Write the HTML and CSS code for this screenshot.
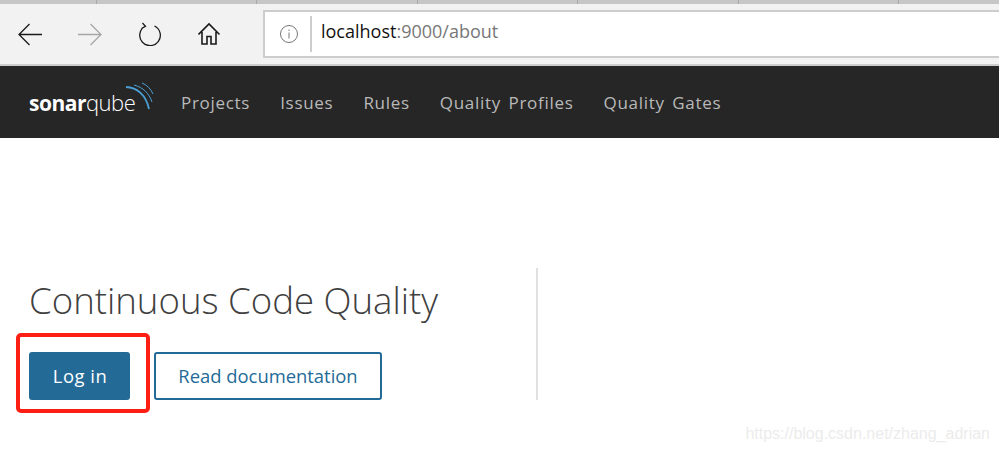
FILE: index.html
```html
<!DOCTYPE html>
<html lang="en">
  <head>
    <meta charset="UTF-8" />
    <meta name="viewport" content="width=device-width, initial-scale=1.0" />
    <title>SonarQube</title>
    <link rel="stylesheet" href="styles.css">
  </head>

  <body>
    <div class="tabs">
      <span class="tab tab-first"></span>
      <span class="tab"></span>
      <span class="tab"></span>
      <span class="tab"></span>
      <span class="tab"></span>
      <span class="tab"></span>
    </div>

    <div class="toolbar">
      <div class="toolbar-icons">
        <svg class="tool" viewBox="0 0 24 24" fill="none" stroke="#1a1a1a" stroke-width="1.3">
          <path d="M1 12.500H24M11.500 2L1 12.500 11.500 23" />
        </svg>
        <svg class="tool" viewBox="0 0 24 24" fill="none" stroke="#a6a6a6" stroke-width="1.3">
          <path d="M0 12.500H23M12.500 2L23 12.500 12.500 23" />
        </svg>
        <svg class="tool" viewBox="0 0 24 24" fill="none" stroke="#1a1a1a" stroke-width="1.3">
          <path d="M7 4.300A10.300 10.300 0 1 0 16.500 4M4.500 1L7.500 4.300 3.500 6.500" />
        </svg>
        <svg class="tool" viewBox="0 0 24 24" fill="none" stroke="#1a1a1a" stroke-width="1.6">
          <path d="M.5 12.500L11 2l10.500 10.500M4 10v12h5v-7.500h4V22h5V10" />
        </svg>
      </div>
      <div class="address">
        <svg class="info" viewBox="0 0 20 20" fill="none" stroke="#777" stroke-width="1">
          <circle cx="10" cy="10" r="8.500" />
          <path d="M10 8.500v6M10 5.500v1.500" />
        </svg>
        <span class="address-text"><b>localhost</b>:9000/about</span>
      </div>
    </div>

    <nav class="navbar">
      <a class="logo" href="#">
        <span class="logo-sonar">sonar</span><span class="logo-qube">qube</span>
        <svg class="logo-arcs" viewBox="0 0 30 30" fill="none" stroke="#4b9fd5">
          <path stroke-width="1.8" d="M1 5c11 .5 20 8 23 22" />
          <path stroke-width="1" d="M9 3c9 2.500 15 8 18 17" />
          <path stroke-width="1" d="M17 1c5 2 9 6 11 11" />
        </svg>
      </a>
      <ul class="menu">
        <li>Projects</li>
        <li>Issues</li>
        <li>Rules</li>
        <li>Quality Profiles</li>
        <li>Quality Gates</li>
      </ul>
    </nav>

    <main class="content">
      <section class="hero">
        <h1>Continuous Code Quality</h1>
        <div class="actions">
          <a class="btn btn-primary" href="#">Log in</a>
          <a class="btn btn-outline" href="#">Read documentation</a>
          <span class="red-box"></span>
        </div>
      </section>
      <div class="watermark">https://blog.csdn.net/zhang_adrian</div>
    </main>
  </body>
</html>
```

FILE: styles.css
```css
body {
  font-family: "Open Sans", "Noto Sans", sans-serif;
  margin: 0;
  padding: 0;
  height: 452px;
  overflow: hidden;
  background-color: #fff;
  display: flex;
  flex-direction: column;
}

.tabs {
  display: flex;
  height: 4px;
  background-color: #c6c6c6;
}

.tab {
  width: 160.4px;
  border-right: 1px solid #a9a9a9;
  box-sizing: border-box;
}

.tab-first {
  width: 97px;
}

.toolbar {
  display: flex;
  align-items: center;
  height: 60px;
  background-color: #f2f2f2;
  border-bottom: 2px solid #cdcdcd;
}

.toolbar-icons {
  display: flex;
  gap: 36px;
  width: 263px;
  padding-left: 18px;
  box-sizing: border-box;
}

.tool {
  width: 24px;
  height: 24px;
}

.address {
  flex: 1;
  display: flex;
  align-items: center;
  height: 48px;
  background-color: #fff;
  border: 2px solid #cdcdcd;
  border-right: none;
  box-sizing: border-box;
}

.info {
  width: 20px;
  height: 20px;
  margin-left: 14px;
}

.address-text {
  margin-left: 11px;
  padding-left: 9px;
  height: 36px;
  line-height: 30px;
  border-left: 2px solid #cdcdcd;
  font-size: 18px;
  color: #777;
}

.address-text b {
  font-weight: 400;
  color: #111;
}

.navbar {
  display: flex;
  align-items: center;
  height: 72px;
  background-color: #262626;
  padding-left: 29px;
}

.logo {
  display: flex;
  align-items: baseline;
  position: relative;
  width: 152px;
  color: #fff;
  text-decoration: none;
  line-height: 24px;
  letter-spacing: -0.5px;
}

.logo-sonar {
  font-size: 21px;
  font-weight: 700;
}

.logo-qube {
  font-size: 22px;
  font-weight: 300;
}

.logo-arcs {
  position: absolute;
  left: 96px;
  top: -8px;
  width: 30px;
  height: 30px;
}

.menu {
  display: flex;
  gap: 30px;
  list-style: none;
  margin: 0;
  padding: 0;
  font-size: 17px;
  letter-spacing: 0.7px;
  word-spacing: 2.5px;
  color: #b9b9b9;
}

.content {
  flex: 1;
  padding: 130px 0 0 29px;
  position: relative;
}

.hero {
  width: 507px;
  height: 132px;
  border-right: 2px solid #e1e1e1;
}

h1 {
  margin: 0;
  height: 84px;
  padding-top: 7px;
  box-sizing: border-box;
  font-size: 36.6px;
  font-weight: 300;
  line-height: 50px;
  color: #404040;
}

.actions {
  display: flex;
  gap: 24px;
  position: relative;
}

.btn {
  height: 48px;
  box-sizing: border-box;
  border-radius: 3px;
  font-size: 18.4px;
  line-height: 44px;
  text-align: center;
  text-decoration: none;
  border: 2px solid #236a97;
}

.btn-primary {
  width: 101px;
  background-color: #236a97;
  color: #fff;
  letter-spacing: 0.5px;
  padding-left: 1px;
}

.btn-outline {
  width: 228px;
  background-color: #fff;
  color: #236a97;
}

.red-box {
  position: absolute;
  left: -13px;
  top: -19px;
  width: 134px;
  height: 80px;
  box-sizing: border-box;
  border: 4px solid #fe1f14;
  border-radius: 5px;
}

.watermark {
  position: absolute;
  right: 9px;
  bottom: 9px;
  font-family: "Liberation Sans", sans-serif;
  font-size: 16px;
  color: #ececec;
}
```
